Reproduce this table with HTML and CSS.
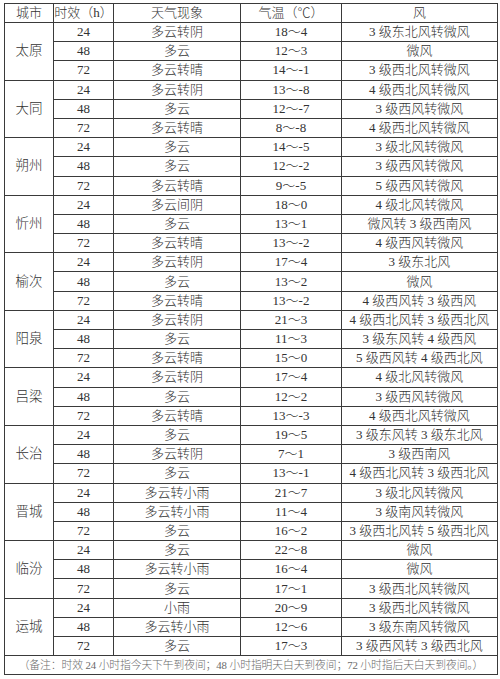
FILE: index.html
```html
<!DOCTYPE html>
<html lang="zh">
<head>
<meta charset="utf-8">
<link rel="stylesheet" href="styles.css">
</head>
<body>
<table class="wx">
<colgroup>
<col class="c-city"><col class="c-time"><col class="c-sky"><col class="c-temp"><col class="c-wind">
</colgroup>
<thead>
<tr class="head"><th>城市</th><th>时效（h）</th><th>天气现象</th><th>气温（℃）</th><th>风</th></tr>
</thead>
<tbody>
<tr><td class="city" rowspan="3">太原</td><td>24</td><td>多云转阴</td><td>18～4</td><td>3 级东北风转微风</td></tr>
<tr><td>48</td><td>多云</td><td>12～3</td><td>微风</td></tr>
<tr><td>72</td><td>多云转晴</td><td>14～-1</td><td>3 级西北风转微风</td></tr>

<tr><td class="city" rowspan="3">大同</td><td>24</td><td>多云转阴</td><td>13～-8</td><td>4 级西北风转微风</td></tr>
<tr><td>48</td><td>多云</td><td>12～-7</td><td>3 级西风转微风</td></tr>
<tr><td>72</td><td>多云转晴</td><td>8～-8</td><td>4 级西北风转微风</td></tr>

<tr><td class="city" rowspan="3">朔州</td><td>24</td><td>多云</td><td>14～-5</td><td>3 级北风转微风</td></tr>
<tr><td>48</td><td>多云</td><td>12～-2</td><td>3 级西风转微风</td></tr>
<tr><td>72</td><td>多云转晴</td><td>9～-5</td><td>5 级西风转微风</td></tr>

<tr><td class="city" rowspan="3">忻州</td><td>24</td><td>多云间阴</td><td>18～0</td><td>4 级北风转微风</td></tr>
<tr><td>48</td><td>多云</td><td>13～1</td><td>微风转 3 级西南风</td></tr>
<tr><td>72</td><td>多云转晴</td><td>13～-2</td><td>4 级西风转微风</td></tr>

<tr><td class="city" rowspan="3">榆次</td><td>24</td><td>多云转阴</td><td>17～4</td><td>3 级东北风</td></tr>
<tr><td>48</td><td>多云</td><td>13～2</td><td>微风</td></tr>
<tr><td>72</td><td>多云转晴</td><td>13～-2</td><td>4 级西风转 3 级西风</td></tr>

<tr><td class="city" rowspan="3">阳泉</td><td>24</td><td>多云转阴</td><td>21～3</td><td>4 级西北风转 3 级西北风</td></tr>
<tr><td>48</td><td>多云</td><td>11～3</td><td>3 级东风转 4 级西风</td></tr>
<tr><td>72</td><td>多云转晴</td><td>15～0</td><td>5 级西风转 4 级西北风</td></tr>

<tr><td class="city" rowspan="3">吕梁</td><td>24</td><td>多云转阴</td><td>17～4</td><td>4 级北风转微风</td></tr>
<tr><td>48</td><td>多云</td><td>12～2</td><td>3 级西风转微风</td></tr>
<tr><td>72</td><td>多云转晴</td><td>13～-3</td><td>4 级西北风转微风</td></tr>

<tr><td class="city" rowspan="3">长治</td><td>24</td><td>多云</td><td>19～5</td><td>3 级东风转 3 级东北风</td></tr>
<tr><td>48</td><td>多云转阴</td><td>7～1</td><td>3 级西南风</td></tr>
<tr><td>72</td><td>多云</td><td>13～-1</td><td>4 级西北风转 3 级西北风</td></tr>

<tr><td class="city" rowspan="3">晋城</td><td>24</td><td>多云转小雨</td><td>21～7</td><td>3 级北风转微风</td></tr>
<tr><td>48</td><td>多云转小雨</td><td>11～4</td><td>3 级南风转微风</td></tr>
<tr><td>72</td><td>多云</td><td>16～2</td><td>3 级西北风转 5 级西北风</td></tr>

<tr><td class="city" rowspan="3">临汾</td><td>24</td><td>多云</td><td>22～8</td><td>微风</td></tr>
<tr><td>48</td><td>多云转小雨</td><td>16～4</td><td>微风</td></tr>
<tr><td>72</td><td>多云</td><td>17～1</td><td>3 级西北风转微风</td></tr>

<tr><td class="city" rowspan="3">运城</td><td>24</td><td>小雨</td><td>20～9</td><td>3 级西北风转微风</td></tr>
<tr><td>48</td><td>多云转小雨</td><td>12～6</td><td>3 级东南风转微风</td></tr>
<tr><td>72</td><td>多云</td><td>17～3</td><td>3 级西风转 3 级西北风</td></tr>
</tbody>
<tfoot>
<tr class="note"><td colspan="5">（备注：时效 24 小时指今天下午到夜间；48 小时指明天白天到夜间；72 小时指后天白天到夜间。）</td></tr>
</tfoot>
</table>
</body>
</html>
```

FILE: styles.css
```css
html, body {
  margin: 0;
  padding: 0;
  background: #fff;
}

body {
  padding: 3px 0 0 4px;
}

.wx {
  border-collapse: collapse;
  table-layout: fixed;
  width: 493px;
  font-family: "Liberation Serif", "Noto Sans CJK SC", serif;
  font-size: 13px;
  font-weight: 300;
  color: #333;
}

.c-city { width: 49px; }
.c-time { width: 60px; }
.c-sky { width: 127px; }
.c-temp { width: 101px; }
.c-wind { width: 156px; }

.wx th,
.wx td {
  border: 1px solid #3a3a3a;
  padding: 0;
  text-align: center;
  vertical-align: middle;
  font-weight: 300;
  line-height: 16px;
  white-space: nowrap;
  overflow: hidden;
}

.head {
  height: 19px;
}

.wx tbody tr {
  height: 19.2px;
}

.city {
  font-size: 13.5px;
}

.note {
  height: 19px;
}

.note td {
  font-size: 10.8px;
  color: #6a6a6a;
  letter-spacing: -0.1px;
}
```
